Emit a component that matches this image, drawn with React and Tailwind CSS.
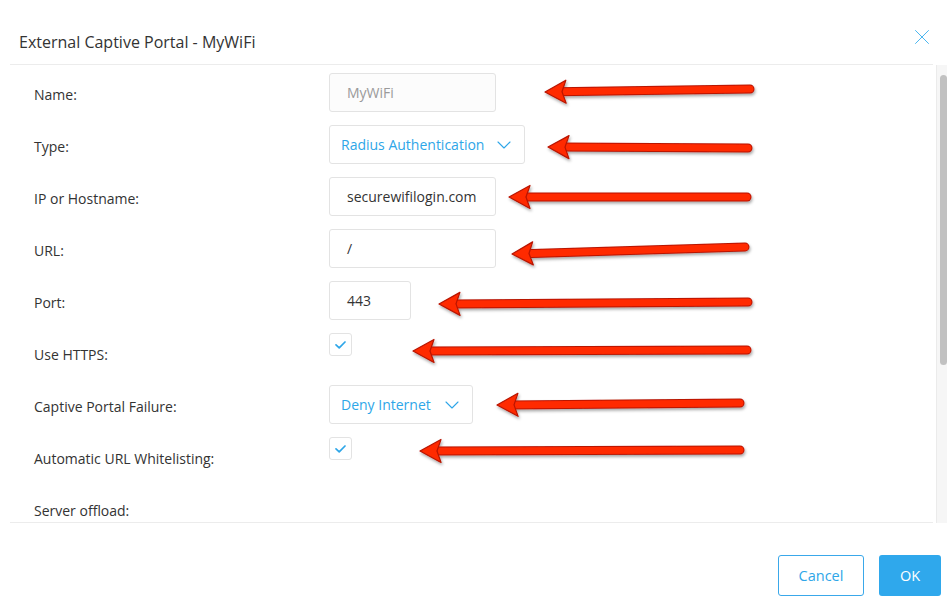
import { X, ChevronDown } from "lucide-react";

const arrows = [
  { x1: 545, y1: 92, x2: 750, y2: 89 },
  { x1: 548, y1: 147, x2: 748, y2: 148 },
  { x1: 509, y1: 197, x2: 747, y2: 197 },
  { x1: 512, y1: 254, x2: 745, y2: 247 },
  { x1: 439, y1: 304, x2: 748, y2: 302 },
  { x1: 413, y1: 351, x2: 747, y2: 350 },
  { x1: 497, y1: 405, x2: 740, y2: 403 },
  { x1: 420, y1: 451, x2: 740, y2: 450 },
];

const Arrow = ({ x1, y1, x2, y2 }) => {
  const ang = (Math.atan2(y2 - y1, x2 - x1) * 180) / Math.PI;
  const len = Math.hypot(x2 - x1, y2 - y1);
  return (
    <g transform={`translate(${x1} ${y1}) rotate(${ang})`}>
      <line x1="12" y1="0" x2={len} y2="0" stroke="#b81400" strokeWidth="9" strokeLinecap="round" />
      <line x1="12" y1="0" x2={len} y2="0" stroke="#ff2a00" strokeWidth="7" strokeLinecap="round" />
      <path d="M0 0 L21 -11.5 L17 0 L21 11.5 Z" fill="#ff2a00" stroke="#b81400" strokeWidth="1.2" strokeLinejoin="round" />
    </g>
  );
};

const Check = () => (
  <div className="w-[23px] h-[23px] border border-[#e3e3e3] rounded-[3px] flex items-center justify-center bg-white">
    <svg width="11" height="8" viewBox="0 0 11 8">
      <path d="M1 3.8 L4.2 6.8 L10 1" fill="none" stroke="#2ea6e8" strokeWidth="1.7" strokeLinecap="round" strokeLinejoin="round" />
    </svg>
  </div>
);

const Input = ({ value, width, muted }) => (
  <div
    className={`h-[39px] border border-[#e3e3e3] rounded-[3px] flex items-center pl-[17px] text-[14px] ${muted ? "bg-[#fcfcfc] text-[#9a9a9a]" : "bg-white text-[#333]"} ${width}`}
  >
    {value}
  </div>
);

const Select = ({ value, width }) => (
  <div className={`h-[39px] border border-[#e3e3e3] rounded-[3px] flex items-center justify-between pl-[11px] pr-[8px] text-[14px] text-[#2ea6e8] bg-white ${width}`}>
    <span>{value}</span>
    <ChevronDown size={24} strokeWidth={1.1} className="text-[#2ea6e8]" />
  </div>
);

const Row = ({ label, children }) => (
  <div className="h-[52px] flex items-start shrink-0">
    <div className="w-[295px] h-[42px] flex items-center text-[14px] text-[#333]">{label}</div>
    <div>{children}</div>
  </div>
);

export default function App() {
  return (
    <div
      className="relative w-[947px] h-[605px] bg-white overflow-hidden flex flex-col"
      style={{ fontFamily: '"Open Sans", "Noto Sans", sans-serif' }}
    >
      <div className="h-[64px] shrink-0 flex items-start justify-between pl-[19px] pr-[12px] pt-[30px]">
        <h1 className="text-[16px] leading-[24px] text-[#333]">External Captive Portal - MyWiFi</h1>
        <X size={26} strokeWidth={0.9} className="text-[#45b5f0] mt-[-6px]" />
      </div>

      <div className="h-[459px] shrink-0 flex">
        <div className="ml-[10px] w-[923px] border-t border-b border-[#ececec] overflow-hidden pl-[24px] pt-[8px] flex flex-col">
          <Row label="Name:"><Input value="MyWiFi" width="w-[167px]" muted /></Row>
          <Row label="Type:"><Select value="Radius Authentication" width="w-[196px]" /></Row>
          <Row label="IP or Hostname:"><Input value="securewifilogin.com" width="w-[167px]" /></Row>
          <Row label="URL:"><Input value="/" width="w-[167px]" /></Row>
          <Row label="Port:"><Input value="443" width="w-[82px]" /></Row>
          <Row label="Use HTTPS:"><Check /></Row>
          <Row label="Captive Portal Failure:"><Select value="Deny Internet" width="w-[144px]" /></Row>
          <Row label="Automatic URL Whitelisting:"><Check /></Row>
          <Row label="Server offload:"></Row>
        </div>
        <div className="ml-[3px] w-[11px] mt-[1px] bg-[#f6f6f6] border-l border-[#ebebeb] pt-[10px] pl-[3px]">
          <div className="w-[7px] h-[290px] rounded-full bg-[#c1c1c1]"></div>
        </div>
      </div>

      <div className="flex-1 flex justify-end items-start pt-[32px] pr-[6px] gap-[15px]">
        <button className="w-[86px] h-[41px] border border-[#3aa8ea] rounded-[3px] text-[14.5px] text-[#2ea6e8] bg-white">Cancel</button>
        <button className="w-[62px] h-[41px] rounded-[3px] text-[14.5px] text-white bg-[#2fa8ec]">OK</button>
      </div>

      <svg className="absolute inset-0 pointer-events-none" width="947" height="605">
        <defs>
          <filter id="sh" x="-10%" y="-50%" width="120%" height="200%">
            <feDropShadow dx="1" dy="2" stdDeviation="1.5" floodColor="#000" floodOpacity="0.35" />
          </filter>
        </defs>
        <g filter="url(#sh)">
          {arrows.map((a, i) => (
            <Arrow key={i} {...a} />
          ))}
        </g>
      </svg>
    </div>
  );
}
